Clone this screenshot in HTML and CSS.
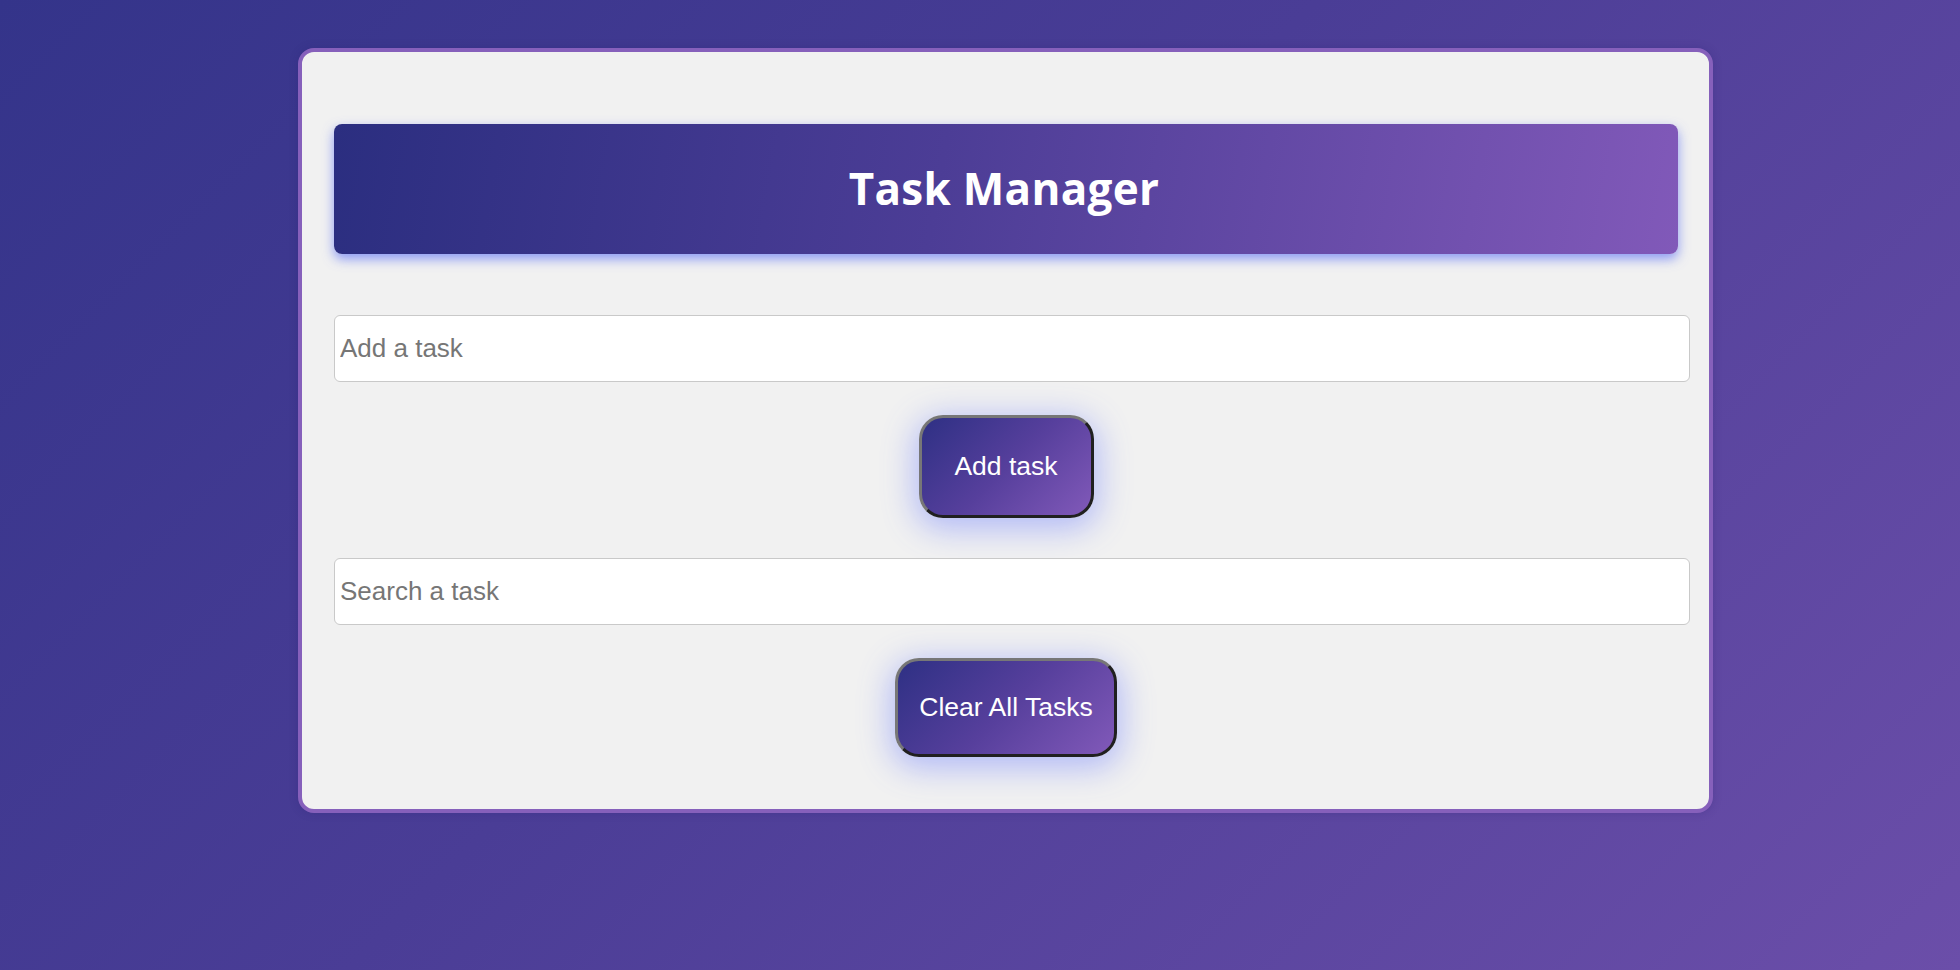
FILE: index.html
```html
<!DOCTYPE html>
<html lang="en">
<head>
<meta charset="utf-8">
<title>Task Manager</title>
<link rel="stylesheet" href="styles.css">
</head>
<body>
<div class="card">
  <header class="banner">
    <h1 class="title">Task Manager</h1>
  </header>
  <input class="field field-add" type="text" placeholder="Add a task">
  <button class="btn btn-add" type="button">Add task</button>
  <input class="field field-search" type="text" placeholder="Search a task">
  <button class="btn btn-clear" type="button">Clear All Tasks</button>
</div>
</body>
</html>
```
FILE: styles.css
```css
html, body {
  margin: 0;
  padding: 0;
}
body {
  min-height: 970px;
  background: linear-gradient(135deg, #34348a 0%, #4a3d96 45%, #6b4ea9 100%);
  font-family: "Liberation Sans", Arial, sans-serif;
  overflow: hidden;
}
.card {
  box-sizing: border-box;
  width: 1415px;
  margin: 48px 0 0 298px;
  border: 4px solid #8660bb;
  border-radius: 16px;
  background: #f1f1f1;
  padding: 32px 31px 52px 32px;
  display: flex;
  flex-direction: column;
  box-shadow: 0 0 8px rgba(40, 30, 110, 0.25);
}
.banner {
  margin-top: 40px;
  height: 130px;
  border-radius: 8px;
  background: linear-gradient(100deg, #2b2e80 0%, #4c3d96 45%, #8159b9 100%);
  box-shadow: 0 5px 12px rgba(95, 115, 245, 0.7);
  display: flex;
  align-items: center;
  justify-content: center;
}
.title {
  margin: 0 0 2px;
  color: #ffffff;
  font-family: "Open Sans", "Noto Sans", sans-serif;
  font-weight: 700;
  font-size: 44px;
  line-height: 1;
  letter-spacing: 0.3px;
  transform: translateX(-2px);
}
.field {
  box-sizing: content-box;
  width: 100%;
  height: 65px;
  padding: 0 5px;
  border: 1px solid #c9c9c9;
  border-radius: 6px;
  background: #ffffff;
  font-family: "Liberation Sans", Arial, sans-serif;
  font-size: 26px;
  color: #333;
  outline: none;
}
.field::placeholder {
  color: #767676;
}
.field-add {
  margin-top: 61px;
}
.field-search {
  margin-top: 40px;
}
.btn {
  box-sizing: border-box;
  align-self: center;
  margin-top: 33px;
  border-style: solid;
  border-width: 3px;
  border-color: #777777 #202020 #202020 #777777;
  border-radius: 24px;
  background: linear-gradient(135deg, #2e3084 0%, #563f9c 50%, #8159b9 100%);
  color: #ffffff;
  font-family: "Liberation Sans", Arial, sans-serif;
  font-size: 26.5px;
  box-shadow: 0 7px 32px 4px rgba(90, 110, 255, 0.42);
  cursor: pointer;
}
.btn-add {
  width: 175px;
  height: 103px;
  padding: 0 20px;
}
.btn-clear {
  width: 222px;
  height: 99px;
  padding: 0 10px;
}
```
